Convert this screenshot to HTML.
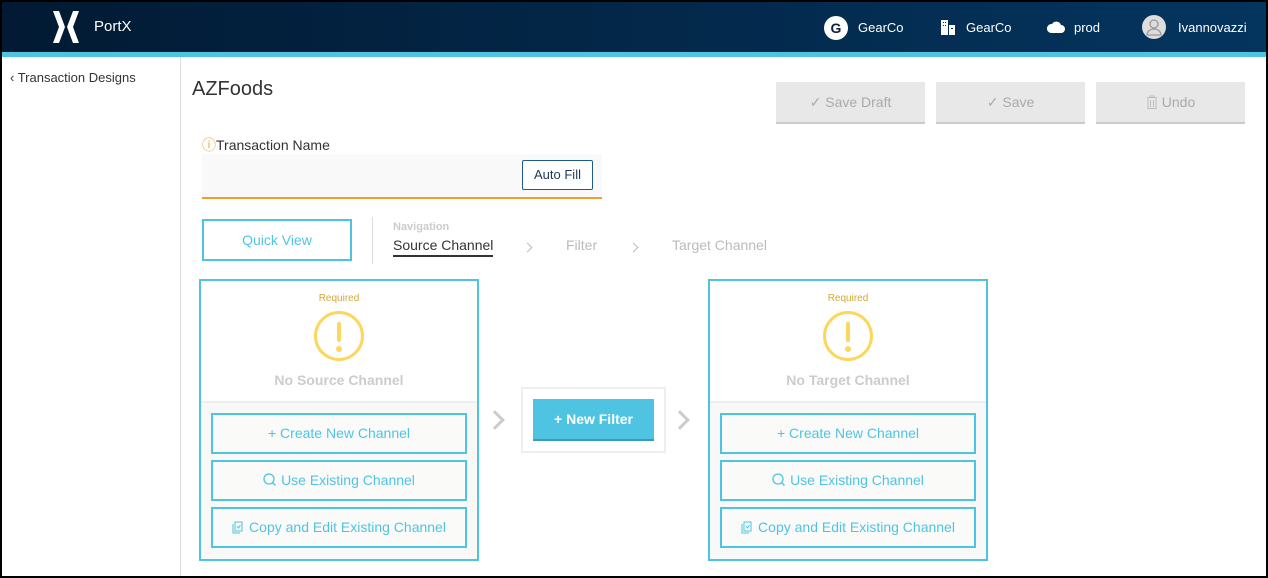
<!DOCTYPE html>
<html><head><style>
*{box-sizing:border-box;margin:0;padding:0}
body{width:1268px;height:578px;overflow:hidden;font-family:"Liberation Sans",sans-serif;background:#000;position:relative}
.frame{position:absolute;left:2px;top:2px;width:1264px;height:574px;background:#fff;overflow:hidden}
.a{position:absolute}
.hdr{left:0;top:0;width:1264px;height:50px;background:linear-gradient(90deg,#021a33,#04355f)}
.cy{left:0;top:50px;width:1264px;height:5px;background:#4fc4e2}
.w{color:#fff;font-size:13px}
.side{left:0;top:55px;width:179px;height:520px;border-right:1px solid #ddd}
.tb{background:#e8e8e8;border-bottom:2px solid #ccc;color:#aaa;font-size:14px;text-align:center;line-height:40px;height:42px;width:149px;top:80px}
.card{border:2px solid #4fc4e2;width:280px;height:282px;top:277px}
.card .bot{position:absolute;left:0;top:120px;width:276px;height:158px;background:#f8f8f6;border-top:2px solid #eee}
.cb{position:absolute;left:10px;width:256px;height:41px;border:2px solid #4fc4e2;background:#fafaf8;color:#4fc4e2;font-size:14px;text-align:center;line-height:37px}
.cb svg{vertical-align:-2px;margin-right:4px}
.req{position:absolute;left:0;width:276px;text-align:center;top:12px;font-size:10px;color:#d4a830}
.ex{position:absolute;left:113px;top:30px;width:50px;height:50px;border:3px solid #fcd75e;border-radius:50%}
.ex:before{content:"";position:absolute;left:20px;top:8px;width:4px;height:20px;background:#fcd75e;border-radius:2px}
.ex:after{content:"";position:absolute;left:19px;top:32px;width:6px;height:6px;background:#fcd75e;border-radius:50%}
.nc{position:absolute;left:0;width:276px;text-align:center;top:91px;font-size:14px;font-weight:bold;color:#ccc}
.chev{width:14px;height:14px;border-right:3px solid #ccc;border-top:3px solid #ccc;transform:rotate(45deg)}
.nv{width:7px;height:7px;border-right:1px solid #bbb;border-top:1px solid #bbb;transform:rotate(45deg)}
</style></head><body><div class="frame">
<div class="a hdr"></div><div class="a cy"></div>
<svg class="a" style="left:49px;top:9px" width="30" height="32" viewBox="0 0 30 32"><path d="M2 0h6l6 16-6 16H2l6-16z M28 0h-6l-6 16 6 16h6l-6-16z" fill="#fff"/></svg>
<div class="a w" style="left:92px;top:16px;font-size:15px">PortX</div>
<div class="a" style="left:822px;top:14px;width:24px;height:24px;border-radius:50%;background:#fff;color:#0a2240;font-weight:bold;font-size:14px;text-align:center;line-height:24px">G</div>
<div class="a w" style="left:856px;top:18px">GearCo</div>
<svg class="a" style="left:938px;top:17px" width="16" height="16"><rect x="1" y="1" width="7" height="15" fill="#fff"/><rect x="9" y="6" width="6" height="10" fill="#fff"/><g fill="#0a2a50"><rect x="3" y="3" width="1" height="1"/><rect x="5" y="3" width="1" height="1"/><rect x="3" y="6" width="1" height="1"/><rect x="5" y="6" width="1" height="1"/><rect x="11" y="9" width="2" height="1"/></g></svg>
<div class="a w" style="left:964px;top:18px">GearCo</div>
<svg class="a" style="left:1045px;top:18px" width="18" height="14"><path d="M4 13h10a4 4 0 0 0 0-8 5 5 0 0 0-9-1 4 4 0 0 0-1 9z" fill="#fff"/></svg>
<div class="a w" style="left:1072px;top:18px">prod</div>
<svg class="a" style="left:1140px;top:13px" width="24" height="24"><circle cx="12" cy="12" r="12" fill="#ddd"/><circle cx="12" cy="9" r="4" fill="none" stroke="#999" stroke-width="1.3"/><path d="M5 20a7 6 0 0 1 14 0z" fill="none" stroke="#999" stroke-width="1.3"/></svg>
<div class="a w" style="left:1176px;top:18px">Ivannovazzi</div>
<div class="a side"></div>
<div class="a" style="left:8px;top:68px;font-size:13px;color:#333">‹ Transaction Designs</div>
<div class="a" style="left:190px;top:76px;font-size:20px;color:#333">AZFoods</div>
<div class="a tb" style="left:774px">✓ Save Draft</div>
<div class="a tb" style="left:934px">✓ Save</div>
<div class="a tb" style="left:1094px"><svg width="12" height="14" style="vertical-align:-2px;margin-right:4px"><path d="M1 2.5h10M4 2.5V1h4v1.5M2 3.5v10h8v-10M4.5 5v7M7.5 5v7" fill="none" stroke="#bbb"/></svg>Undo</div>
<div class="a" style="left:200px;top:133px;font-size:14px;color:#333"><span style="color:#f0a030">ⓘ</span>Transaction Name</div>
<div class="a" style="left:200px;top:152px;width:400px;height:45px;background:#f9f9f9;border-bottom:2px solid #f0a030"></div>
<div class="a" style="left:520px;top:158px;width:71px;height:30px;border:1px solid #1e5a8a;border-radius:2px;background:#fff;color:#1e3a5a;font-size:13px;text-align:center;line-height:28px">Auto Fill</div>
<div class="a" style="left:200px;top:217px;width:150px;height:42px;border:2px solid #4fc4e2;color:#4fc4e2;font-size:14px;text-align:center;line-height:38px">Quick View</div>
<div class="a" style="left:370px;top:215px;width:1px;height:47px;background:#ddd"></div>
<div class="a" style="left:391px;top:219px;font-size:11px;font-weight:bold;color:#ccc">Navigation</div>
<div class="a" style="left:391px;top:235px;font-size:14px;color:#333;border-bottom:2px solid #333;padding-bottom:2px">Source Channel</div>
<div class="a nv" style="left:522px;top:242px"></div>
<div class="a" style="left:564px;top:235px;font-size:14px;color:#bbb">Filter</div>
<div class="a nv" style="left:628px;top:242px"></div>
<div class="a" style="left:670px;top:235px;font-size:14px;color:#bbb">Target Channel</div>

<div class="a card" style="left:197px"><div class="req">Required</div><div class="ex"></div><div class="nc">No Source Channel</div><div class="bot"></div>
<div class="cb" style="top:132px">+ Create New Channel</div><div class="cb" style="top:179px"><svg width="14" height="14"><circle cx="6" cy="6" r="5" fill="none" stroke="#4fc4e2" stroke-width="1.3"/><path d="M9.5 9.5l3 3" stroke="#4fc4e2" stroke-width="1.3"/></svg>Use Existing Channel</div><div class="cb" style="top:226px"><svg width="13" height="14"><path d="M3 2h7v9H3zM1 4v9h7" fill="none" stroke="#4fc4e2"/><path d="M5 6l1.5 2 2-3" fill="none" stroke="#4fc4e2"/></svg>Copy and Edit Existing Channel</div></div>
<div class="a chev" style="left:486px;top:411px"></div>
<div class="a" style="left:519px;top:385px;width:145px;height:66px;border:2px solid #eee"></div>
<div class="a" style="left:531px;top:397px;width:121px;height:42px;background:#4fc4e2;border-bottom:2px solid #3a9cb8;color:#fff;font-weight:bold;font-size:14px;text-align:center;line-height:40px">+ New Filter</div>
<div class="a chev" style="left:671px;top:411px"></div>
<div class="a card" style="left:706px"><div class="req">Required</div><div class="ex"></div><div class="nc">No Target Channel</div><div class="bot"></div>
<div class="cb" style="top:132px">+ Create New Channel</div><div class="cb" style="top:179px"><svg width="14" height="14"><circle cx="6" cy="6" r="5" fill="none" stroke="#4fc4e2" stroke-width="1.3"/><path d="M9.5 9.5l3 3" stroke="#4fc4e2" stroke-width="1.3"/></svg>Use Existing Channel</div><div class="cb" style="top:226px"><svg width="13" height="14"><path d="M3 2h7v9H3zM1 4v9h7" fill="none" stroke="#4fc4e2"/><path d="M5 6l1.5 2 2-3" fill="none" stroke="#4fc4e2"/></svg>Copy and Edit Existing Channel</div></div>
</div></body></html>
